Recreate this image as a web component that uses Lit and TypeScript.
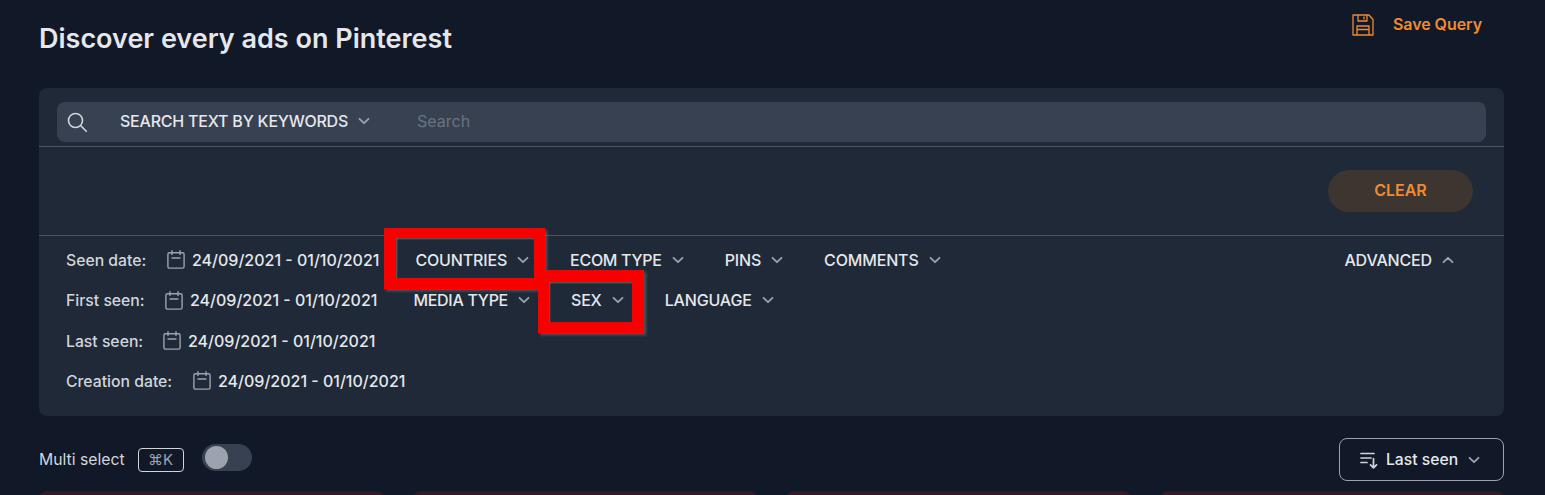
import { LitElement, html, css } from "lit";
import { customElement } from "lit/decorators.js";

const chevron = () => html`<svg class="chev" viewBox="0 0 12 12" fill="none" stroke="currentColor" stroke-width="1.8" stroke-linecap="round" stroke-linejoin="round"><path d="M1.5 3.8 6 8.2l4.5-4.4"/></svg>`;
const cal = html`<svg class="cal" viewBox="0 0 18 19" fill="none" stroke="currentColor" stroke-width="1.4" stroke-linecap="round" stroke-linejoin="round"><rect x=".9" y="2.8" width="16.2" height="15.3" rx="1.6"/><path d="M5 .8v3.8M13 .8v3.8M5 8h8"/></svg>`;

const rows = [
  { label: "Seen date:", width: 101, items: ["COUNTRIES", "ECOM TYPE", "PINS", "COMMENTS"], adv: true },
  { label: "First seen:", width: 99, items: ["MEDIA TYPE", "SEX", "LANGUAGE"], adv: false },
  { label: "Last seen:", width: 97, items: [], adv: false },
  { label: "Creation date:", width: 127, items: [], adv: false },
];

@customElement("app-root")
export class AppRoot extends LitElement {
  static styles = css`
    :host { display: block; height: 495px; overflow: hidden; background: #111827; font-family: Inter, "Liberation Sans", sans-serif; color: #e5e7eb; }
    .page { padding: 0 41px 0 39px; }
    .top { display: flex; justify-content: space-between; align-items: flex-start; height: 88px; }
    h1 { margin: 24px 0 0; font-size: 27px; line-height: 30px; font-weight: 600; color: #e5e7eb; }
    .save { display: flex; align-items: flex-start; gap: 18px; margin: 12px 22px 0 0; color: #f08a34; font-size: 16px; line-height: 24px; font-weight: 600; letter-spacing: -0.05px; }
    .save svg { width: 24px; height: 24px; margin-top: 1px; }
    .panel { background: #1f2937; border-radius: 8px; height: 328px; }
    .search-wrap { padding: 14px 18px 4px; border-bottom: 1px solid #4b5563; height: 40px; }
    .search { display: flex; align-items: center; height: 40px; padding-bottom: 2px; box-sizing: border-box; background: #374151; border-radius: 8px; font-size: 16px; }
    .glass { width: 22px; height: 22px; margin: 1px 0 0 9px; color: #d1d5db; }
    .kw { margin-left: 32px; font-weight: 500; color: #e5e7eb; letter-spacing: -0.22px; }
    .search .chev { margin-left: 10px; }
    .ph { margin-left: 47px; color: #6b7280; }
    .clear-row { display: flex; justify-content: flex-end; align-items: center; height: 88px; padding-right: 31px; border-bottom: 1px solid #4b5563; }
    .clear { width: 145px; height: 42px; padding-bottom: 2px; box-sizing: border-box; border-radius: 21px; background: #3d352f; color: #f08a34; font-size: 16px; font-weight: 600; display: flex; align-items: center; justify-content: center; }
    .filters { padding: 3.6px 50px 0 27px; font-size: 16px; font-weight: 500; color: #e5e7eb; }
    .row { display: flex; align-items: center; height: 40.4px; }
    .label { font-size: 15.75px; line-height: 20px; padding-top: 2px; color: #d1d5db; font-weight: 500; flex: none; }
    .cal { width: 18px; height: 19px; color: #9ca3af; margin-right: 7px; flex: none; }
    .date { display: flex; align-items: center; margin-right: -6px; }
    .items { display: flex; align-items: center; gap: 41px; margin-left: 42px; }
    .item { display: flex; align-items: center; gap: 10px; white-space: nowrap; letter-spacing: -0.16px; }
    .chev { width: 12px; height: 12px; color: #9ca3af; flex: none; }
    .spacer { flex: 1; }
    .bottom { display: flex; justify-content: space-between; align-items: center; height: 43px; margin-top: 22px; }
    .multi { display: flex; align-items: center; font-size: 15.75px; color: #d1d5db; }
    .kbd { margin-left: 13px; width: 46px; height: 24px; border: 1px solid #d1d5db; border-radius: 4px; box-sizing: border-box; display: flex; align-items: center; justify-content: center; font-size: 15px; color: #9ca3af; }
    .toggle { margin: 0 0 4px 18px; width: 50px; height: 27px; border-radius: 14px; background: #374151; position: relative; }
    .knob { position: absolute; left: 3px; top: 2px; width: 23px; height: 23px; border-radius: 50%; background: #9ca3af; }
    .sort { width: 165px; height: 43px; padding-left: 20px; box-sizing: border-box; border: 1px solid #9ca3af; border-radius: 8px; display: flex; align-items: center; font-size: 15.7px; font-weight: 500; color: #e5e7eb; }
    .sort .chev { margin-left: 10px; }
    .sort .si { width: 18px; height: 18px; color: #d1d5db; margin-right: 8px; }
    .cards { display: flex; gap: 29px; margin-top: 10px; }
    .card { flex: 1; height: 40px; border-radius: 8px; background: #351926; }
    .mark { position: absolute; box-sizing: border-box; border-style: solid; border-color: #f70000; box-shadow: 2px 2px 3px rgba(120,120,120,.6), inset 1px 1px 2px rgba(120,120,120,.8); pointer-events: none; }
    .m1 { left: 384px; top: 228px; width: 161px; height: 61px; border-width: 10px 11px 11px 12px; }
    .m2 { left: 538px; top: 270px; width: 106px; height: 63px; border-width: 12px 12px 11px 11px; }
  `;

  private tight(s: string) {
    return s.includes("TYPE") ? "letter-spacing:-0.3px" : "";
  }

  render() {
    return html`<div class="page">
      <div class="top">
        <h1>Discover every ads on Pinterest</h1>
        <div class="save">
          <svg viewBox="0 0 24 24" fill="none" stroke="currentColor" stroke-width="1.3" stroke-linejoin="round"><path d="M2 2h16l4 4.5V22H2zM7 2v6h9V2M13 3.5v3M6 22v-9h12v9M6 16.5h12"/></svg>
          <span>Save Query</span>
        </div>
      </div>
      <div class="panel">
        <div class="search-wrap">
          <div class="search">
            <svg class="glass" viewBox="0 0 22 22" fill="none" stroke="currentColor" stroke-width="1.6" stroke-linecap="round"><circle cx="9.5" cy="9.5" r="7"/><path d="m14.8 14.8 5.5 5.5"/></svg>
            <span class="kw">SEARCH TEXT BY KEYWORDS</span>${chevron()}
            <span class="ph">Search</span>
          </div>
        </div>
        <div class="clear-row"><div class="clear">CLEAR</div></div>
        <div class="filters">
          ${rows.map((r) => html`<div class="row">
            <span class="label" style="width:${r.width}px">${r.label}</span>
            <span class="date">${cal}24/09/2021 - 01/10/2021</span>
            <span class="items">${r.items.map((it) => html`<span class="item" style=${this.tight(it)}>${it}${chevron()}</span>`)}</span>
            ${r.adv ? html`<span class="spacer"></span><span class="item">ADVANCED<svg class="chev" viewBox="0 0 12 12" fill="none" stroke="currentColor" stroke-width="1.8" stroke-linecap="round" stroke-linejoin="round"><path d="M1.5 8.2 6 3.8l4.5 4.4"/></svg></span>` : ""}
          </div>`)}
        </div>
      </div>
      <div class="bottom">
        <div class="multi">Multi select<span class="kbd">⌘K</span><span class="toggle"><span class="knob"></span></span></div>
        <div class="sort">
          <svg class="si" viewBox="0 0 18 18" fill="none" stroke="currentColor" stroke-width="1.7" stroke-linecap="round" stroke-linejoin="round"><path d="M1 2.5h13M1 7h10M1 11.5h6M13.5 7.5v9M10.5 13.8l3 3 3-3"/></svg>
          <span>Last seen</span>${chevron()}
        </div>
      </div>
      <div class="cards"><div class="card"></div><div class="card"></div><div class="card"></div><div class="card"></div></div>
      <div class="mark m1"></div><div class="mark m2"></div>
    </div>`;
  }
}
